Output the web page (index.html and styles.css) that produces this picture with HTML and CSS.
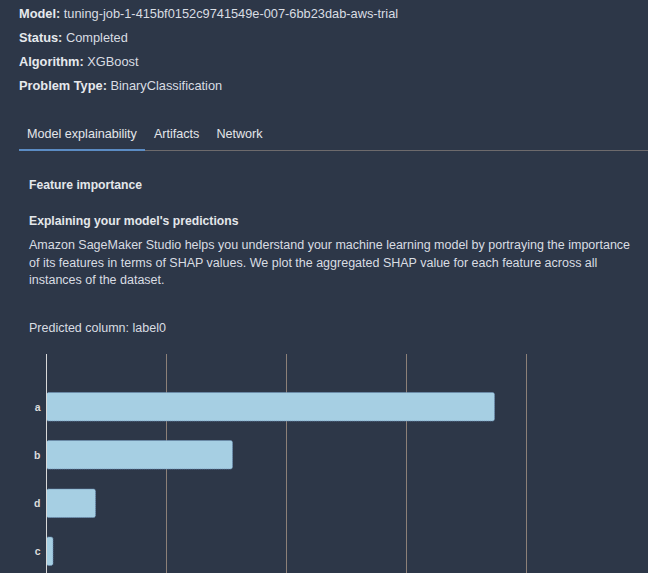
FILE: index.html
```html
<!DOCTYPE html>
<html>
<head>
<meta charset="utf-8">
<link rel="stylesheet" href="styles.css">
</head>
<body>
<div class="meta">
  <div class="meta-line"><b>Model:</b> tuning-job-1-415bf0152c9741549e-007-6bb23dab-aws-trial</div>
  <div class="meta-line"><b>Status:</b> Completed</div>
  <div class="meta-line"><b>Algorithm:</b> XGBoost</div>
  <div class="meta-line"><b>Problem Type:</b> BinaryClassification</div>
</div>
<div class="tabs">
  <div class="tab active">Model explainability</div>
  <div class="tab">Artifacts</div>
  <div class="tab">Network</div>
</div>
<div class="content">
  <div class="section-title">Feature importance</div>
  <div class="sub-title">Explaining your model's predictions</div>
  <p class="desc">Amazon SageMaker Studio helps you understand your machine learning model by portraying the importance of its features in terms of SHAP values. We plot the aggregated SHAP value for each feature across all instances of the dataset.</p>
  <div class="predicted">Predicted column: label0</div>
</div>
<svg class="chart" width="648" height="230" viewBox="0 0 648 230">
  <g class="grid">
    <line x1="166.5" y1="0" x2="166.5" y2="230"/>
    <line x1="286.5" y1="0" x2="286.5" y2="230"/>
    <line x1="406.5" y1="0" x2="406.5" y2="230"/>
    <line x1="526.5" y1="0" x2="526.5" y2="230"/>
  </g>
  <g class="bars">
    <rect x="46.5" y="38.5" width="448" height="28.5" rx="2"/>
    <rect x="46.5" y="86.5" width="186" height="28.5" rx="2"/>
    <rect x="46.5" y="135" width="49" height="28.5" rx="2"/>
    <rect x="46.5" y="183" width="6.5" height="28.5" rx="2"/>
  </g>
  <line class="axis" x1="46.5" y1="0" x2="46.5" y2="230"/>
  <g class="labels">
    <text x="40.5" y="52.7">a</text>
    <text x="40.5" y="100.5">b</text>
    <text x="40.5" y="148.5">d</text>
    <text x="40.5" y="196.8">c</text>
  </g>
</svg>
</body>
</html>
```
FILE: styles.css
```css
html, body {
  margin: 0;
  padding: 0;
  background: #2d3748;
  color: #d9dde3;
  font-family: "Liberation Sans", Arial, sans-serif;
  font-size: 12.5px;
  overflow: hidden;
}
.meta {
  padding: 2px 19px 0;
}
.meta-line {
  line-height: 24px;
  font-size: 12.8px;
  color: #d9dde3;
}
.meta-line b {
  color: #e6e9ed;
}
.tabs {
  display: flex;
  margin: 16px 0 0 19px;
  border-bottom: 1px solid #6d6a6c;
}
.tab {
  padding: 11px 8px 6px;
  line-height: 18px;
  font-size: 12.6px;
  color: #e4e6ea;
  border-bottom: 2px solid transparent;
  margin-bottom: -1px;
}
.tab + .tab {
  margin-left: 1px;
}
.tab.active {
  border-bottom-color: #5b8cc4;
}
.content {
  padding: 25px 8px 0 29px;
}
.section-title {
  font-weight: bold;
  line-height: 18px;
  font-size: 12.2px;
  color: #e4e7eb;
}
.sub-title {
  margin-top: 18px;
  font-weight: bold;
  line-height: 18px;
  font-size: 12.2px;
  color: #e4e7eb;
}
.desc {
  margin: 7px 0 0;
  line-height: 17.5px;
  color: #d9dde3;
}
.predicted {
  margin-top: 29px;
  line-height: 18px;
  color: #d9dde3;
}
.chart {
  display: block;
  margin-top: 17px;
}
.grid line {
  stroke: #8c8078;
  stroke-width: 1;
}
.axis {
  stroke: #d8d8d8;
  stroke-width: 1;
}
.bars rect {
  fill: #a6cfe3;
  stroke: #6f93b8;
  stroke-width: 1;
  stroke-dasharray: 1 1;
}
.labels text {
  fill: #dcdcdc;
  font-family: "Liberation Sans", Arial, sans-serif;
  font-size: 10.5px;
  font-weight: bold;
  text-anchor: end;
  dominant-baseline: central;
}
```
